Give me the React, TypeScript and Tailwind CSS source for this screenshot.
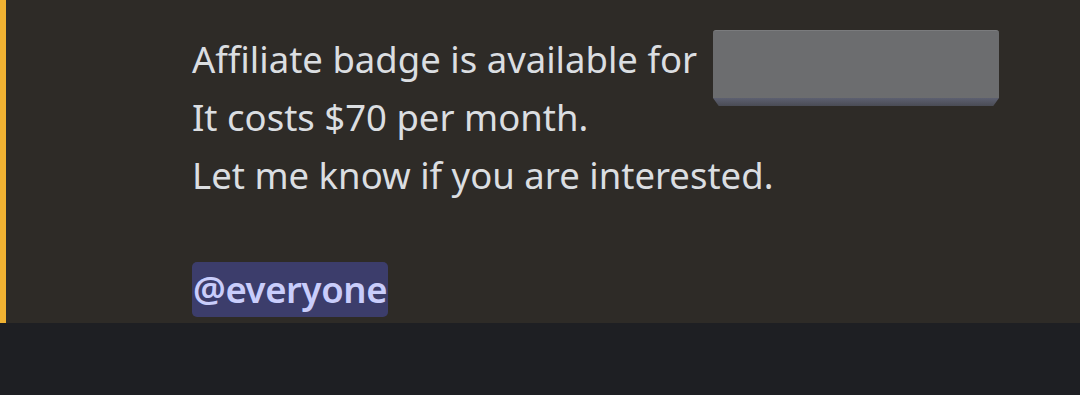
export default function App() {
  return (
    <div className="w-[1080px] h-[395px] flex flex-col bg-[#1e1f23] overflow-hidden">
      <div className="h-[323px] border-l-[6px] border-[#f0b232] bg-[#2e2b27] pl-[186px] pt-[30px] relative">
        <div className="text-[36.5px] leading-[58px] text-[#dbdee1] font-['Noto_Sans',sans-serif]">
          <div>Affiliate badge is available for</div>
          <div>It costs $70 per month.</div>
          <div>Let me know if you are interested.</div>
          <div className="h-[56px]" />
          <div>
            <span className="inline-block rounded-[5px] bg-[#3c3d6b] pl-[1px] pr-[1px] leading-[55px] font-semibold tracking-[-0.4px] text-[#c9cdfb]">
              @everyone
            </span>
          </div>
        </div>
        <div className="absolute left-[707px] top-[30px] w-[286px] h-[76px]">
          <div className="h-[68px] rounded-t-[3px] bg-[#6c6d6f] border-t border-[#7a7b7d]" />
          <div className="h-[8px] bg-gradient-to-b from-[#5d6070] to-[#4a4c55] [clip-path:polygon(0_0,100%_0,98%_100%,2%_100%)]" />
        </div>
      </div>
    </div>
  );
}
